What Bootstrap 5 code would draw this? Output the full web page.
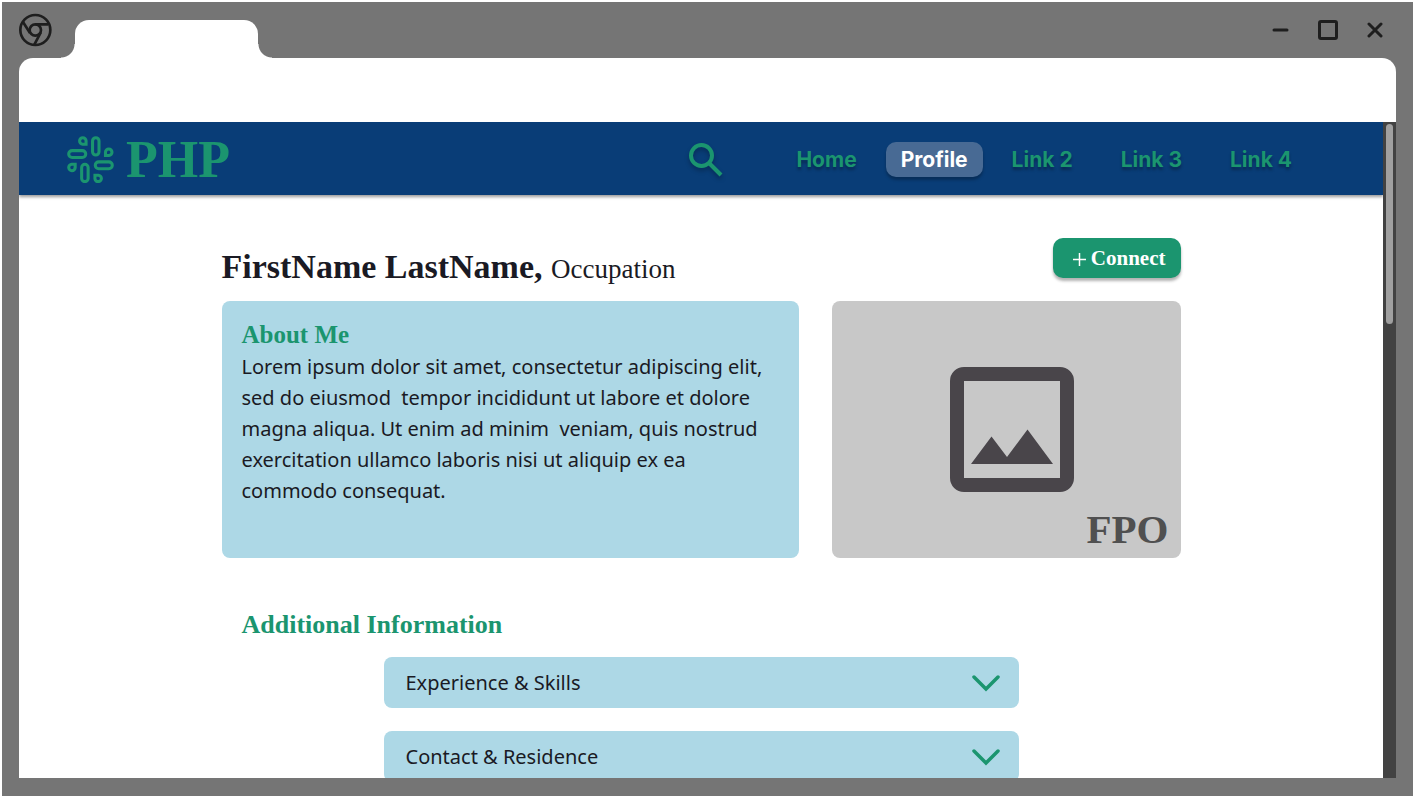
<!DOCTYPE html>
<html lang="en" class="h-100">
<head>
<meta charset="utf-8">
<meta name="viewport" content="width=device-width, initial-scale=1">
<title>PHP – Profile</title>
<link href="https://cdn.jsdelivr.net/npm/bootstrap@5.3.0/dist/css/bootstrap.min.css" rel="stylesheet">
<style>
  :root { --green: #1b956f; --navy: #093d77; --sky: #add8e6; --ink: #1a1a24; --chrome: #757575; }
  body { font-family: "Noto Sans", sans-serif; color: var(--ink); background: #fff; padding: 2px 3px 3px 2px; }
  .serif { font-family: "Liberation Serif", serif; }
  .green { color: var(--green); }
  .browser { background: var(--chrome); padding: 0 17px 18px; }
  .titlebar { height: 56px; }
  .tab-shape { width: 183px; height: 38px; margin-left: 22px; background: #fff; border-radius: 14px 14px 0 0; }
  .tab-shape::before, .tab-shape::after { content: ""; position: absolute; bottom: 0; width: 14px; height: 14px; }
  .tab-shape::before { right: 100%; background: radial-gradient(circle at 0 0, transparent 13px, #fff 14px); }
  .tab-shape::after { left: 100%; background: radial-gradient(circle at 100% 0, transparent 13px, #fff 14px); }
  .win-controls { gap: 29px; padding-right: 13px; }
  .win-controls button, .search-btn { line-height: 0; }
  .toolbar { height: 64px; background: #fff; border-radius: 14px 14px 0 0; }
  .site-nav { height: 73px; background: var(--navy); box-shadow: 0 2px 3px rgba(0,0,0,.4); padding: 2px 76px 0 48px; }
  .brand-name { font-size: 52px; line-height: 71px; }
  .site-links { gap: 14px; margin-left: 58px; }
  .site-links a { font: 700 21px/35px Inter, sans-serif; color: var(--green); padding: 0 15px; border-radius: 10px; text-shadow: 0 3px 3px rgba(0,0,0,.3); }
  .site-links a.active { background: #486a94; color: #fff; box-shadow: 0 3px 3px rgba(0,0,0,.25); text-shadow: none; }
  .search-btn svg { filter: drop-shadow(0 3px 2px rgba(0,0,0,.25)); }
  .scroll-track { width: 13px; background: #424242; padding: 2px 3px; }
  .scroll-thumb { height: 200px; border-radius: 4px; background: #a0a0a0; }
  .profile { max-width: 959px; padding-top: 43px; }
  .profile-head { height: 63px; }
  .profile-head h1 { font-size: 34px; line-height: 40px; padding-top: 9px; }
  .profile-head small { font-size: 27px; }
  .btn-connect { height: 40px; padding: 2px 15px 0 19px; gap: 4px; border-radius: 10px; background: var(--green); box-shadow: 0 3px 3px rgba(0,0,0,.3); font-size: 21px; }
  .panels { display: grid; grid-template-columns: 577fr 349fr; column-gap: 33px; }
  .panel { border-radius: 8px; min-height: 257px; }
  .about { background: var(--sky); padding: 18px 20px; }
  .section-title { font-size: 25px; line-height: 32px; }
  .copy { font-size: 20px; line-height: 31px; }
  .photo { background: #c8c8c8; padding: 66px 12px 7px; }
  .photo svg { margin-left: 12px; }
  .fpo { font-size: 41px; line-height: 44px; color: #505050; }
  .more-title { margin: 51px 0 16px 20px; font-size: 26px; }
  .more { max-width: 635px; gap: 23px; }
  .more button { height: 51px; padding: 0 19px 0 22px; border-radius: 8px; background: var(--sky); color: var(--ink); font-size: 20px; }
</style>
</head>
<body class="h-100">
<div class="browser d-flex flex-column h-100">
  <div class="titlebar d-flex flex-shrink-0">
    <svg class="align-self-center" width="34" height="34" viewBox="0 0 102 102" fill="none" stroke="#1e1e1e" stroke-width="8">
      <circle cx="49" cy="51" r="45"/><circle cx="49" cy="51" r="17"/>
      <path d="M49 34H88M33 60L12 27M65 59L46 95"/>
    </svg>
    <div class="tab-shape position-relative align-self-end"></div>
    <div class="win-controls d-flex align-items-center ms-auto">
      <button type="button" class="btn p-0 border-0" aria-label="Minimize"><svg width="17" height="20" viewBox="0 0 17 20" stroke="#1e1e1e" stroke-width="3" stroke-linecap="round"><path d="M2 10H15"/></svg></button>
      <button type="button" class="btn p-0 border-0" aria-label="Maximize"><svg width="20" height="20" viewBox="0 0 20 20" fill="none" stroke="#1e1e1e" stroke-width="3"><rect x="1.5" y="1.5" width="17" height="17" rx="1.5"/></svg></button>
      <button type="button" class="btn p-0 border-0" aria-label="Close"><svg width="16" height="20" viewBox="0 0 16 20" stroke="#1e1e1e" stroke-width="3" stroke-linecap="round"><path d="M2 4L14 16M14 4L2 16"/></svg></button>
    </div>
  </div>
  <div class="toolbar flex-shrink-0"></div>
  <div class="d-flex flex-grow-1 overflow-hidden bg-white">
    <div class="flex-grow-1 overflow-hidden">
      <nav class="site-nav d-flex align-items-center">
        <a href="#" class="d-flex align-items-center text-decoration-none green">
          <svg width="47" height="47" viewBox="0 0 138 138" fill="none" stroke="currentColor" stroke-width="9">
            <rect x="75" y="5" width="19" height="51" rx="9.500"/><rect x="5" y="43" width="50" height="20" rx="10"/>
            <rect x="43" y="83" width="19" height="51" rx="9.500"/><rect x="83" y="76" width="50" height="20" rx="10"/>
            <path d="M56 24H46A9.500 9.500 0 1 1 56 14ZM113 57V47A9.500 9.500 0 1 1 123 57ZM24 83V93A9.500 9.500 0 1 1 14 83ZM82 115H92A9.500 9.500 0 1 1 82 125Z"/>
          </svg>
          <span class="brand-name serif fw-bold ms-2 ps-1">PHP</span>
        </a>
        <button type="button" class="search-btn btn p-0 border-0 ms-auto" aria-label="Search">
          <svg width="34" height="34" viewBox="0 0 34 34" fill="none" stroke="#1b956f" stroke-width="4"><circle cx="12.500" cy="12.500" r="10.500"/><path d="M19.500 19.500L32 32"/></svg>
        </button>
        <div class="site-links d-flex">
          <a href="#" class="text-decoration-none">Home</a>
          <a href="#" class="text-decoration-none active" aria-current="page">Profile</a>
          <a href="#" class="text-decoration-none">Link 2</a>
          <a href="#" class="text-decoration-none ms-1">Link 3</a>
          <a href="#" class="text-decoration-none ms-1">Link 4</a>
        </div>
      </nav>
      <main class="profile mx-auto">
        <div class="profile-head d-flex justify-content-between align-items-start">
          <h1 class="serif fw-bold mb-0">FirstName LastName, <small class="fw-normal">Occupation</small></h1>
          <button type="button" class="btn-connect btn border-0 d-flex align-items-center text-white serif fw-bold">
            <svg width="15" height="15" viewBox="0 0 15 15" stroke="currentColor" stroke-width="1.500"><path d="M1 7.500H14M7.500 1V14"/></svg>Connect
          </button>
        </div>
        <div class="panels">
          <section class="panel about">
            <h2 class="section-title serif fw-bold green mb-0">About Me</h2>
            <p class="copy mb-0 text-nowrap">Lorem ipsum dolor sit amet, consectetur adipiscing elit,<br>sed do eiusmod&nbsp; tempor incididunt ut labore et dolore<br>magna aliqua. Ut enim ad minim&nbsp; veniam, quis nostrud<br>exercitation ullamco laboris nisi ut aliquip ex ea<br>commodo consequat.</p>
          </section>
          <section class="panel photo d-flex flex-column justify-content-between align-items-center">
            <svg width="124" height="125" viewBox="0 0 124 125" fill="#49454a" role="img" aria-label="Photo placeholder"><path fill-rule="evenodd" d="M14 0H110A14 14 0 0 1 124 14V111A14 14 0 0 1 110 125H14A14 14 0 0 1 0 111V14A14 14 0 0 1 14 0ZM14 14V111H110V14Z"/><path d="M21 97L41.500 69.500L57 90L77.500 62.500L103 97Z"/></svg>
            <span class="fpo serif fw-bold align-self-end">FPO</span>
          </section>
        </div>
        <h2 class="section-title more-title serif fw-bold green">Additional Information</h2>
        <div class="more d-flex flex-column mx-auto">
          <button type="button" class="btn border-0 d-flex justify-content-between align-items-center">Experience &amp; Skills
            <svg width="28" height="18" viewBox="0 0 28 18" fill="none" stroke="#1b956f" stroke-width="3.500" stroke-linecap="round"><path d="M2 3L14 15L26 3"/></svg></button>
          <button type="button" class="btn border-0 d-flex justify-content-between align-items-center">Contact &amp; Residence
            <svg width="28" height="18" viewBox="0 0 28 18" fill="none" stroke="#1b956f" stroke-width="3.500" stroke-linecap="round"><path d="M2 3L14 15L26 3"/></svg></button>
        </div>
      </main>
    </div>
    <div class="scroll-track flex-shrink-0"><div class="scroll-thumb"></div></div>
  </div>
</div>
<script src="https://cdn.jsdelivr.net/npm/bootstrap@5.3.0/dist/js/bootstrap.bundle.min.js"></script>
</body>
</html>
